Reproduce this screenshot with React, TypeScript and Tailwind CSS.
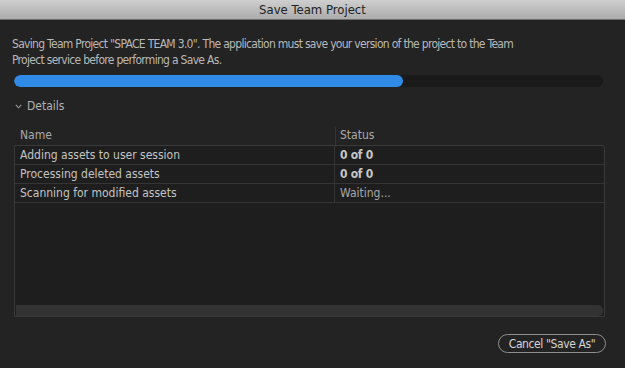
import React from 'react';

const rows = [
  { name: 'Adding assets to user session', status: '0 of 0', bold: true },
  { name: 'Processing deleted assets', status: '0 of 0', bold: true },
  { name: 'Scanning for modified assets', status: 'Waiting...', bold: false },
];

const font = { fontFamily: '"DejaVu Sans Condensed", "DejaVu Sans", sans-serif' };

export default function App() {
  return (
    <div className="w-[625px] h-[368px] bg-[#232323] flex flex-col overflow-hidden" style={font}>
      {/* Title bar */}
      <div className="h-[20px] shrink-0 bg-gradient-to-b from-[#cfcfcf] to-[#ababab] border-b border-[#6e6e6e] flex items-center justify-center">
        <span className="text-[13px] text-[#222] leading-none">Save Team Project</span>
      </div>

      <div className="flex flex-col px-[14px] flex-1">
        <p className="mt-[16px] ml-[-2px] text-[12px] leading-[16px] tracking-[-0.7px] text-[#b8b8b8]">
          Saving Team Project "SPACE TEAM 3.0". The application must save your version of the project to the Team
          <br />
          Project service before performing a Save As.
        </p>

        {/* Progress */}
        <div className="mt-[7px] w-[589px] h-[12px] rounded-full bg-[#1a1a1a] overflow-hidden">
          <div className="h-full w-[389px] rounded-full bg-[#2f8be6]" />
        </div>

        {/* Details toggle */}
        <div className="mt-[12px] flex items-center h-[14px]">
          <svg width="7" height="5" viewBox="0 0 7 5" className="ml-[1px]">
            <path d="M0.8 0.8 L3.5 3.8 L6.2 0.8" fill="none" stroke="#9a9a9a" strokeWidth="1.1" />
          </svg>
          <span className="ml-[5px] text-[12px] text-[#b0b0b0]">Details</span>
        </div>

        {/* Table header */}
        <div className="mt-[12px] flex h-[20px] items-center text-[12px] text-[#a9a9a9]">
          <div className="w-[321px] pl-[6px]">Name</div>
          <div className="h-[18px] self-end border-l border-[#333]" />
          <div className="pl-[4px]">Status</div>
        </div>

        {/* Table */}
        <div className="w-[591px] h-[172px] border border-[#3a3a3a] rounded-tr-[3px] bg-[#1e1e1e] flex flex-col">
          <div className="flex-1">
            {rows.map((r) => (
              <div key={r.name} className="flex h-[19px] border-b border-[#343434] text-[12px] items-center">
                <div className="w-[320px] pl-[5px] text-[#c4c4c4] border-r border-[#343434] h-full flex items-center">
                  {r.name}
                </div>
                <div
                  className={`pl-[5px] h-full flex items-center ${r.bold ? 'text-[#c6c6c6] font-bold tracking-[-0.3px]' : 'text-[#a8a8a8]'}`}
                >
                  {r.status}
                </div>
              </div>
            ))}
          </div>
          <div className="h-[11px] mx-[1px] rounded-r-[5px] bg-[#333333]" />
        </div>

        {/* Footer */}
        <div className="mt-[17px] flex justify-end pr-[5px]">
          <button className="w-[108px] h-[19px] rounded-full border-[1.5px] border-[#8f8f8f] text-[12px] tracking-[-0.4px] text-[#d4d4d4] flex items-center justify-center leading-none">
            Cancel "Save As"
          </button>
        </div>
      </div>
    </div>
  );
}
